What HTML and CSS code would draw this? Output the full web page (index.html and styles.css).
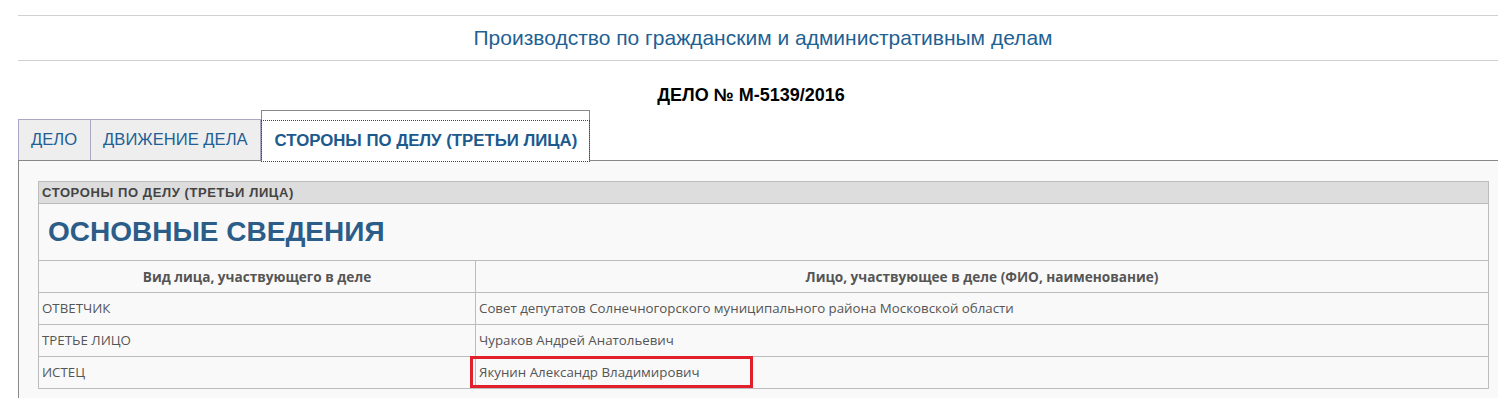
FILE: index.html
```html
<!DOCTYPE html>
<html lang="ru">

<head>
    <meta charset="UTF-8">
    <meta name="viewport" content="width=device-width, initial-scale=1.0">
    <title>Дело № М-5139/2016</title>
    <link rel="stylesheet" href="styles.css">
</head>

<body>
    <div class="page">
        <div class="title">Производство по гражданским и административным делам</div>

        <div class="case-no">ДЕЛО № М-5139/2016</div>

        <ul class="tabs">
            <li class="tab"><a href="#">ДЕЛО</a></li>
            <li class="tab"><a href="#">ДВИЖЕНИЕ ДЕЛА</a></li>
            <li class="tab active"><a href="#">СТОРОНЫ ПО ДЕЛУ (ТРЕТЬИ ЛИЦА)</a></li>
        </ul>

        <div class="panel">
            <table class="parties">
                <tr>
                    <td class="caption" colspan="2">СТОРОНЫ ПО ДЕЛУ (ТРЕТЬИ ЛИЦА)</td>
                </tr>
                <tr>
                    <td class="heading" colspan="2">ОСНОВНЫЕ СВЕДЕНИЯ</td>
                </tr>
                <tr>
                    <th class="col-kind">Вид лица, участвующего в деле</th>
                    <th>Лицо, участвующее в деле (ФИО, наименование)</th>
                </tr>
                <tr>
                    <td>ОТВЕТЧИК</td>
                    <td>Совет депутатов Солнечногорского муниципального района Московской области</td>
                </tr>
                <tr>
                    <td>ТРЕТЬЕ ЛИЦО</td>
                    <td>Чураков Андрей Анатольевич</td>
                </tr>
                <tr>
                    <td>ИСТЕЦ</td>
                    <td class="marked">Якунин Александр Владимирович<span class="mark"></span></td>
                </tr>
            </table>
        </div>
    </div>
</body>

</html>
```

FILE: styles.css
```css
body {
    margin: 0;
    background: #fff;
    font-family: "Liberation Sans", Arial, sans-serif;
}

.page {
    margin-left: 18px;
    padding-top: 15px;
    width: 1480px;
}

.title {
    border-top: 1px solid #d0d0d0;
    border-bottom: 1px solid #d0d0d0;
    height: 44px;
    line-height: 44px;
    padding-left: 10px;
    text-align: center;
    font-size: 21px;
    color: #1f6193;
}

.case-no {
    margin-top: 25px;
    line-height: 18px;
    text-align: center;
    font-size: 18px;
    font-weight: bold;
    color: #000;
    padding-right: 14px;
}

.tabs {
    list-style: none;
    margin: 6px 0 0;
    padding: 0;
    display: flex;
    align-items: flex-end;
    border-bottom: 1px solid #888;
}

.tab {
    background: #eeeeee;
    border: 1px solid #a8a8c4;
    border-bottom: none;
    border-left: none;
    height: 40px;
}

.tab:first-child {
    border-left: 1px solid #a8a8c4;
}

.tab a {
    display: block;
    line-height: 40px;
    padding: 0 13px 0 12px;
    font-size: 16.6px;
    color: #1f5f96;
    text-decoration: none;
}

.tab + .tab a {
    padding: 0 12px;
}

.tab.active {
    position: relative;
    height: auto;
    background: #fff;
    border: 1px solid #888;
    border-bottom: none;
    padding-top: 9px;
    margin-bottom: -2px;
}

.tab.active a {
    margin: 0 -1px;
    border: 1px dotted #1d4d78;
    padding: 0 12px 0 13px;
    font-size: 16.8px;
    font-weight: bold;
    color: #1c5a8e;
}

.panel {
    background: #f9f9f9;
    border-left: 1px solid #888;
    padding: 20px 9px 20px 19px;
}

.parties {
    width: 100%;
    border-collapse: collapse;
    font-family: "Open Sans", sans-serif;
    font-size: 13.3px;
    color: #555;
}

.parties td,
.parties th {
    border: 1px solid #bcbcbc;
    padding: 0 3px;
    line-height: 31px;
    text-align: left;
    vertical-align: middle;
}

.parties th {
    text-align: center;
    font-size: 13.6px;
    font-weight: bold;
    color: #555;
}

.col-kind {
    width: 430px;
}

.parties .caption {
    background: #dddddd;
    line-height: 21px;
    font-family: "Liberation Sans", Arial, sans-serif;
    font-size: 13px;
    letter-spacing: 0.6px;
    font-weight: bold;
    color: #444;
}

.parties .heading {
    line-height: 56px;
    padding-left: 9px;
    font-family: "Liberation Sans", Arial, sans-serif;
    font-size: 28px;
    font-weight: bold;
    color: #2b5d88;
}

.marked {
    position: relative;
}

.mark {
    position: absolute;
    left: -6px;
    top: -1px;
    width: 283px;
    height: 32px;
    box-sizing: border-box;
    border: 3px solid #e2202b;
}
```
